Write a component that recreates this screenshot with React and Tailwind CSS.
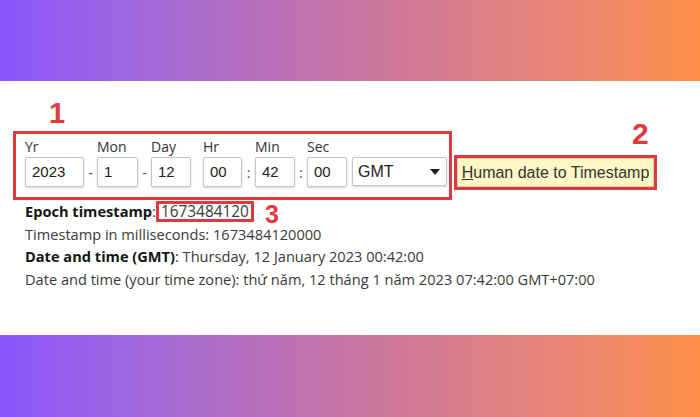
import React from 'react';

const band = 'bg-linear-to-r from-[#8b55ff] via-[#c873a2] to-[#ff8f45]';
const sans = { fontFamily: '"Open Sans", sans-serif' };

const Field = ({ label, value, w }) => (
  <div className="flex flex-col">
    <span className="text-[14px] leading-[19px] text-[#333] mb-[1px]">{label}</span>
    <div
      className={`${w} h-[30px] flex items-center px-[6px] bg-white border border-[#c6c6c6] rounded-[2px] shadow-[0_1px_2px_rgba(0,0,0,0.18)] text-[15px] text-[#222] font-['Liberation_Sans',Arial,sans-serif]`}
    >
      {value}
    </div>
  </div>
);

const Sep = ({ ch, w }) => (
  <div className={`${w} h-[30px] flex items-center justify-center text-[14px] text-[#555]`}>{ch}</div>
);

export default function App() {
  return (
    <div className="w-[700px] h-[417px] flex flex-col bg-white font-['Open_Sans',sans-serif]" style={sans}>
      <div className={`h-[81px] ${band}`} />

      <div className="relative h-[254px] pt-[50px] pl-[13px]">
        {/* annotation numbers */}
        <span className="absolute left-[49px] top-[18px] text-[29px] leading-none font-bold text-[#e0393e] font-['Liberation_Sans',Arial,sans-serif]">1</span>
        <span className="absolute left-[632px] top-[38px] text-[30px] leading-none font-bold text-[#e0393e] font-['Liberation_Sans',Arial,sans-serif]">2</span>
        <span className="absolute left-[265px] top-[121px] text-[25px] leading-none font-bold text-[#e0393e] font-['Liberation_Sans',Arial,sans-serif]">3</span>

        <div className="flex items-start">
          <div className="w-[439px] h-[69px] border-[3px] border-[#dc3a3e] pl-[9px] pt-[3px]">
            <div className="flex items-end">
              <Field label="Yr" value="2023" w="w-[59px]" />
              <Sep ch="-" w="w-[13px]" />
              <Field label="Mon" value="1" w="w-[41px]" />
              <Sep ch="-" w="w-[13px]" />
              <Field label="Day" value="12" w="w-[40px]" />
              <div className="w-[12px]" />
              <Field label="Hr" value="00" w="w-[39px]" />
              <Sep ch=":" w="w-[13px]" />
              <Field label="Min" value="42" w="w-[40px]" />
              <Sep ch=":" w="w-[12px]" />
              <Field label="Sec" value="00" w="w-[40px]" />
              <div className="w-[5px]" />
              <div className="w-[95px] h-[29px] mb-[1px] flex items-center justify-between pl-[5px] pr-[6px] bg-white border border-[#c6c6c6] rounded-[2px] shadow-[0_1px_2px_rgba(0,0,0,0.18)] text-[16px] text-[#222] font-['Liberation_Sans',Arial,sans-serif]">
                <span>GMT</span>
                <svg width="10" height="6" viewBox="0 0 10 6">
                  <path d="M0 0 L10 0 L5 6 Z" fill="#222" />
                </svg>
              </div>
            </div>
          </div>

          <div className="ml-[2px] mt-[24px] w-[203px] h-[35px] border-[3px] border-[#dc3a3e]">
            <div className="w-full h-full flex items-center justify-center bg-[#fdf8c6] border border-[#d8d2a0] text-[16px] text-[#333] font-['Liberation_Sans',Arial,sans-serif]">
              <span><span className="underline">H</span>uman date to Timestamp</span>
            </div>
          </div>
        </div>

        <div className="pl-[12px] text-[14.6px] leading-[22.5px] text-[#3a3a3a]">
          <div>
            <span className="font-bold text-[#151515]">Epoch timestamp</span>:
            <span className="inline-block h-[21px] leading-[15px] px-[2px] border-[3px] border-[#dc3a3e] align-baseline text-[15.4px]">1673484120</span>
          </div>
          <div>Timestamp in milliseconds: 1673484120000</div>
          <div>
            <span className="font-bold text-[#151515]">Date and time (GMT)</span>: Thursday, 12 January 2023 00:42:00
          </div>
          <div>Date and time (your time zone): thứ năm, 12 tháng 1 năm 2023 07:42:00 GMT+07:00</div>
        </div>
      </div>

      <div className={`flex-1 ${band}`} />
    </div>
  );
}
